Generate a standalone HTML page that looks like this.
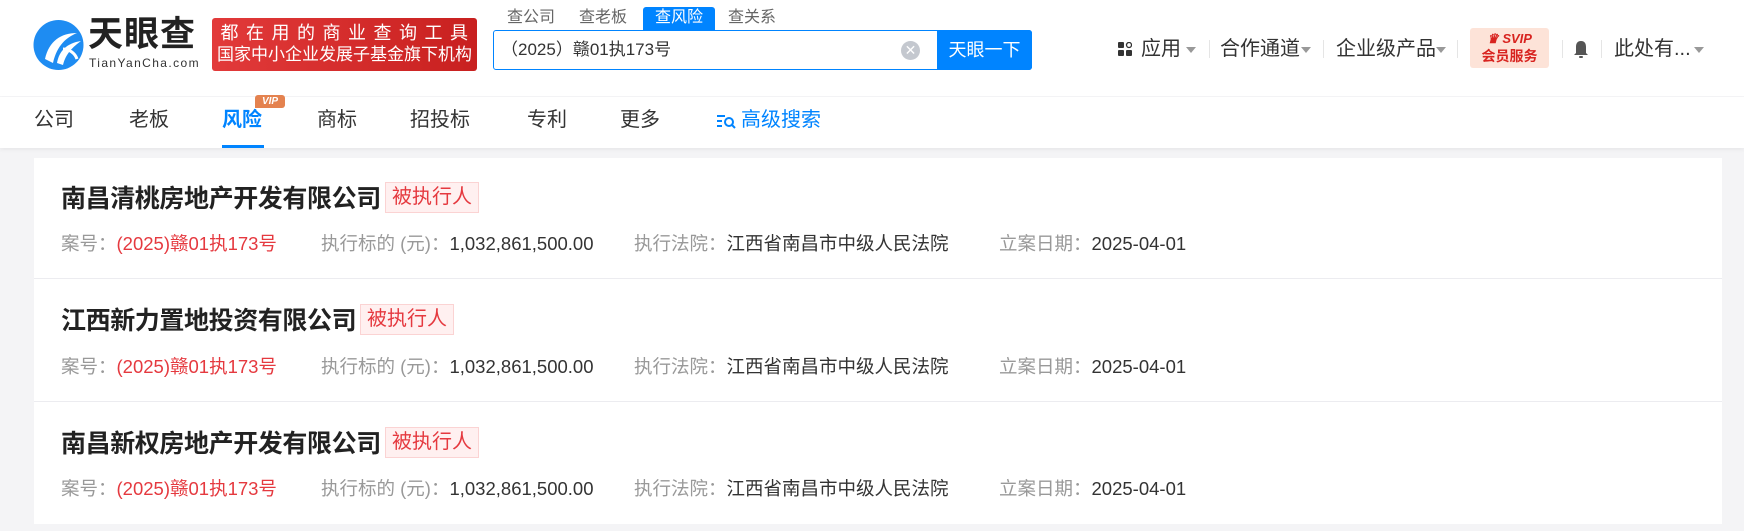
<!DOCTYPE html>
<html><head><meta charset="utf-8"><style>
*{margin:0;padding:0;box-sizing:border-box}
body{width:1744px;height:531px;overflow:hidden;background:#f4f4f6;font-family:"Liberation Sans","Noto Sans CJK SC",sans-serif;position:relative;color:#333}
.a{position:absolute;white-space:nowrap}
#hd{position:absolute;left:0;top:0;width:1744px;height:96px;background:#fff}
#nav{position:absolute;left:0;top:97px;width:1744px;height:51px;background:#fff;box-shadow:0 2px 4px rgba(0,0,0,.05)}
.n{position:absolute;top:107px;font-size:20px;line-height:26px;color:#333}
.arr{position:absolute;width:0;height:0;border-left:5px solid transparent;border-right:5px solid transparent;border-top:6px solid #999}
.sep{position:absolute;width:1px;height:18px;background:#e5e5e5;top:40px}
.r{position:absolute;font-size:20px;line-height:24px;top:37px;color:#333}
#card{position:absolute;left:34px;top:158px;width:1688px;height:366px;background:#fff}
.line{position:absolute;left:34px;width:1688px;height:1px;background:#ececf0}
.t{position:absolute;left:61px;font-size:25px;font-weight:bold;color:#222;line-height:32px;letter-spacing:-0.4px}
.b{position:absolute;left:385px;width:94px;height:31px;background:#fff0f0;border:1px solid #fbd3d3;color:#e5393f;font-size:20px;line-height:29px;text-align:center}
.m{position:absolute;font-size:18.5px;line-height:24px;color:#999}
.m span{color:#333}
.m .red{color:#e5393f}
</style></head><body>
<div id="hd"></div>
<svg class="a" style="left:33px;top:19px" width="51" height="52" viewBox="0 0 51 52">
<circle cx="25.5" cy="26" r="25" fill="#1e8cf2"/>
<path d="M12 40 C16 22 28 14 44 14 C34 18 24 26 20 44 Z" fill="#fff"/>
<path d="M24 44 C26 32 34 24 48 22 C40 28 33 34 30 46 Z" fill="#fff"/>
<path d="M30 30 C36 30 42 34 44 40" stroke="#fff" stroke-width="3" fill="none"/>
</svg>
<div class="a" style="left:88px;top:16px;font-size:35px;font-weight:bold;color:#222;line-height:38px;letter-spacing:1px">天眼查</div>
<div class="a" style="left:89px;top:57px;font-size:12px;color:#333;line-height:13px;letter-spacing:1.4px">TianYanCha.com</div>
<div class="a" style="left:212px;top:18px;width:265px;height:53px;background:linear-gradient(90deg,#e23a3a,#c8201f);border-radius:3px;color:#fff;text-align:center;overflow:hidden">
<div style="font-size:18px;line-height:22px;margin-top:4px;letter-spacing:7.5px;padding-left:7px">都在用的商业查询工具</div>
<div style="font-size:17px;line-height:22px;letter-spacing:0px">国家中小企业发展子基金旗下机构</div></div>
<div class="a" style="left:507px;top:8px;font-size:16px;color:#666;line-height:20px">查公司</div>
<div class="a" style="left:579px;top:8px;font-size:16px;color:#666;line-height:20px">查老板</div>
<div class="a" style="left:643px;top:7px;width:72px;height:24px;background:#0084ff;border-radius:3px 3px 0 0;color:#fff;font-size:16px;line-height:22px;text-align:center">查风险</div>
<div class="a" style="left:728px;top:8px;font-size:16px;color:#666;line-height:20px">查关系</div>
<div class="a" style="left:493px;top:30px;width:539px;height:40px;border:1px solid #0084ff;border-radius:3px;background:#fff"></div>
<div class="a" style="left:937px;top:30px;width:95px;height:40px;background:#0084ff;border-radius:0 3px 3px 0;color:#fff;font-size:18px;line-height:40px;text-align:center">天眼一下</div>
<div class="a" style="left:501px;top:40px;font-size:17px;color:#333;line-height:20px">（2025）赣01执173号</div>
<div class="a" style="left:901px;top:41px;width:19px;height:19px;border-radius:50%;background:#c4c8cf;color:#fff;font-size:14px;line-height:19px;text-align:center">✕</div>
<svg class="a" style="left:1118px;top:42px" width="14" height="14"><rect x="0" y="0" width="6" height="6" rx="1" fill="#333"/><circle cx="11" cy="3" r="2.5" fill="none" stroke="#333" stroke-width="1.3"/><rect x="0" y="8" width="6" height="6" rx="1" fill="#333"/><rect x="8" y="8" width="6" height="6" rx="1" fill="#333"/></svg>
<div class="r" style="left:1141px">应用</div><div class="arr" style="left:1186px;top:47px"></div>
<div class="sep" style="left:1209px"></div>
<div class="r" style="left:1220px">合作通道</div><div class="arr" style="left:1301px;top:47px"></div>
<div class="sep" style="left:1323px"></div>
<div class="r" style="left:1336px">企业级产品</div><div class="arr" style="left:1436px;top:47px"></div>
<div class="sep" style="left:1457px"></div>
<div class="a" style="left:1470px;top:28px;width:79px;height:40px;background:#fde3d8;border-radius:3px;text-align:center;color:#d8231f;font-weight:bold">
<div style="font-size:13px;line-height:16px;margin-top:3px;font-style:italic">♛ SVIP</div>
<div style="font-size:14px;line-height:18px">会员服务</div></div>
<div class="sep" style="left:1562px"></div>
<svg class="a" style="left:1573px;top:40px" width="16" height="19"><path d="M8 1 C4 1 3 4 3 7 L3 13 L1 15 L15 15 L13 13 L13 7 C13 4 12 1 8 1Z" fill="#555"/><rect x="6" y="16" width="4" height="2" rx="1" fill="#555"/></svg>
<div class="sep" style="left:1601px"></div>
<div class="r" style="left:1614px">此处有...</div><div class="arr" style="left:1694px;top:47px"></div>
<div id="nav"></div>
<div class="n" style="left:34px">公司</div>
<div class="n" style="left:129px">老板</div>
<div class="n" style="left:222px;color:#0084ff;font-weight:bold">风险</div>
<div class="a" style="left:222px;top:145px;width:42px;height:3px;background:#0084ff"></div>
<div class="a" style="left:255px;top:95px;width:30px;height:13px;background:#e4824f;border-radius:3px 3px 3px 0;color:#fff;font-size:10px;font-style:italic;font-weight:bold;line-height:13px;text-align:center">VIP</div>
<div class="n" style="left:317px">商标</div>
<div class="n" style="left:410px">招投标</div>
<div class="n" style="left:527px">专利</div>
<div class="n" style="left:620px">更多</div>
<svg class="a" style="left:716px;top:113px" width="20" height="16"><path d="M1 3H9M1 8H6M1 13H6" stroke="#0084ff" stroke-width="2"/><circle cx="13" cy="9" r="4" stroke="#0084ff" stroke-width="2" fill="none"/><path d="M16 12L19 15" stroke="#0084ff" stroke-width="2"/></svg>
<div class="n" style="left:741px;color:#0084ff">高级搜索</div>
<div id="card"></div>
<div class="line" style="top:278px"></div>
<div class="line" style="top:401px"></div>

<div class="t" style="top:183px">南昌清桃房地产开发有限公司</div>
<div class="b" style="top:182px">被执行人</div>
<div class="m" style="left:61px;top:232px">案号：<span class="red">(2025)赣01执173号</span></div>
<div class="m" style="left:321px;top:232px">执行标的 (元)：<span>1,032,861,500.00</span></div>
<div class="m" style="left:634px;top:232px">执行法院：<span>江西省南昌市中级人民法院</span></div>
<div class="m" style="left:999px;top:232px">立案日期：<span>2025-04-01</span></div>

<div class="t" style="top:305px">江西新力置地投资有限公司</div>
<div class="b" style="top:304px;left:360px">被执行人</div>
<div class="m" style="left:61px;top:355px">案号：<span class="red">(2025)赣01执173号</span></div>
<div class="m" style="left:321px;top:355px">执行标的 (元)：<span>1,032,861,500.00</span></div>
<div class="m" style="left:634px;top:355px">执行法院：<span>江西省南昌市中级人民法院</span></div>
<div class="m" style="left:999px;top:355px">立案日期：<span>2025-04-01</span></div>

<div class="t" style="top:428px">南昌新权房地产开发有限公司</div>
<div class="b" style="top:427px">被执行人</div>
<div class="m" style="left:61px;top:477px">案号：<span class="red">(2025)赣01执173号</span></div>
<div class="m" style="left:321px;top:477px">执行标的 (元)：<span>1,032,861,500.00</span></div>
<div class="m" style="left:634px;top:477px">执行法院：<span>江西省南昌市中级人民法院</span></div>
<div class="m" style="left:999px;top:477px">立案日期：<span>2025-04-01</span></div>
</body></html>
